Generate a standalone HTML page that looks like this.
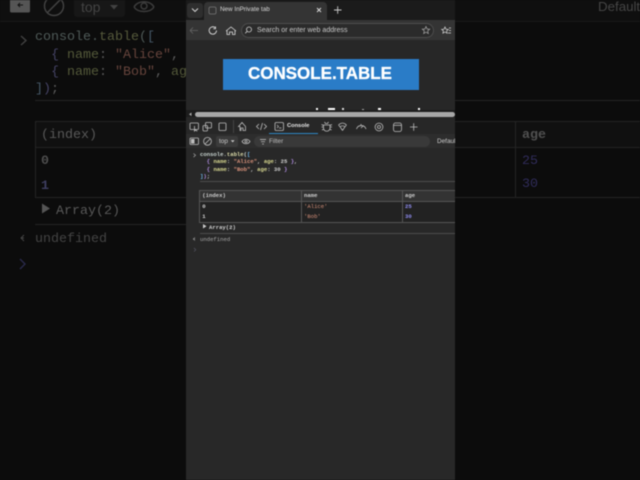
<!DOCTYPE html>
<html><head><meta charset="utf-8">
<style>
html,body{margin:0;padding:0;width:640px;height:480px;overflow:hidden;background:#0c0c0c}
div,svg{position:absolute}
.t{white-space:pre;font-family:"Liberation Sans",sans-serif;line-height:1}
.m{white-space:pre;font-family:"Liberation Mono",monospace;line-height:1}
.bm{font-size:13.33px;color:#585858}
.sm{font-size:5.6px;color:#cfcfcf;font-weight:bold}
svg{overflow:visible;fill:none}
</style></head><body>
<div style="left:0;top:0;width:640px;height:480px;overflow:hidden;filter:blur(.45px)">

<!-- left dim area -->
<div style="left:0;top:0;width:186px;height:21px;background:#0f0f0f"></div>
<div style="left:0;top:21px;width:186px;height:1px;background:#191919"></div>
<div style="left:74px;top:0;width:51px;height:17px;background:#171717;border-radius:0 0 3px 3px"></div>
<svg style="left:0;top:0" width="186" height="22">
<rect x="10" y="-4" width="20" height="16.500" rx="1.500" fill="#555"/><path d="M23 5h-5M20 3l-2 2 2 2" stroke="#111" stroke-width="1"/>
<circle cx="54" cy="6" r="9.500" stroke="#444" stroke-width="1.400"/><path d="M47 13L61-1" stroke="#444" stroke-width="1.400"/>
<path d="M110 5h8l-4 4.500z" fill="#424242"/>
<path d="M134 7c4-7 16-7 20 0" stroke="#3c3c3c" stroke-width="1.500"/><path d="M134 7c4 6 16 6 20 0" stroke="#3c3c3c" stroke-width="1.500"/><circle cx="144" cy="6" r="3" stroke="#3c3c3c" stroke-width="1.400"/>
<path d="M21 36l5 4.500-5 4.500" stroke="#424242" stroke-width="1.400"/>
</svg>
<div class="t" style="left:81px;top:0;font-size:14px;color:#444">top</div>
<div class="m bm" style="left:35px;top:31px"><span style="color:#4f5a58">console.</span><span style="color:#565a3c">table</span><span style="color:#4f5a58">(</span><span style="color:#465868">[</span></div>
<div class="m bm" style="left:35px;top:48.500px">  <span style="color:#464466">{</span> <span style="color:#54593a">name</span><span style="color:#5c5c5c">:</span> <span style="color:#66443c">"Alice"</span><span style="color:#5c5c5c">, </span><span style="color:#54593a">ag</span></div>
<div class="m bm" style="left:35px;top:65.500px">  <span style="color:#464466">{</span> <span style="color:#54593a">name</span><span style="color:#5c5c5c">:</span> <span style="color:#66443c">"Bob"</span><span style="color:#5c5c5c">, </span><span style="color:#54593a">age</span></div>
<div class="m bm" style="left:35px;top:83px"><span style="color:#465868">]</span><span style="color:#464466">)</span><span style="color:#5c5c5c">;</span></div>
<div style="left:35px;top:100px;width:151px;height:1px;background:#242424"></div>
<!-- left table -->
<div style="left:35px;top:121px;width:151px;height:1px;background:#242424"></div>
<div style="left:35px;top:147px;width:151px;height:1px;background:#242424"></div>
<div style="left:35px;top:197px;width:151px;height:1px;background:#242424"></div>
<div style="left:35px;top:121px;width:1px;height:77px;background:#242424"></div>
<div style="left:36px;top:122px;width:150px;height:25px;background:#101010"></div>
<div class="m bm" style="left:41px;top:129px">(index)</div>
<div class="m bm" style="left:41px;top:155px;font-weight:bold;color:#4e4e4e">0</div>
<div class="m bm" style="left:41px;top:180px;font-weight:bold;color:#3e3e60">1</div>
<svg style="left:0;top:200px" width="186" height="80">
<path d="M42 3.500l8 5-8 5z" fill="#555"/>
<path d="M24 35l-3 3 3 3" stroke="#454545" stroke-width="1"/><path d="M21 38h3" stroke="#454545"/>
<path d="M20 59l5 5-5 5" stroke="#2a2a4c" stroke-width="1.400"/>
</svg>
<div class="m bm" style="left:56px;top:205px">Array(2)</div>
<div style="left:35px;top:224px;width:151px;height:1px;background:#242424"></div>
<div class="m bm" style="left:35px;top:232.500px;color:#444">undefined</div>

<!-- right dim area -->
<div style="left:455px;top:0;width:185px;height:21px;background:#0f0f0f"></div>
<div style="left:455px;top:21px;width:185px;height:1px;background:#191919"></div>
<div style="left:455px;top:100px;width:185px;height:1px;background:#242424"></div>
<div style="left:455px;top:121px;width:185px;height:1px;background:#242424"></div>
<div style="left:455px;top:122px;width:185px;height:25px;background:#101010"></div>
<div style="left:455px;top:147px;width:185px;height:1px;background:#242424"></div>
<div style="left:455px;top:197px;width:185px;height:1px;background:#242424"></div>
<div style="left:515px;top:121px;width:1px;height:77px;background:#242424"></div>
<div class="t" style="left:598px;top:0;font-size:13.300px;color:#454545">Default</div>
<div class="m bm" style="left:522px;top:129px;font-weight:bold;color:#505050">age</div>
<div class="m bm" style="left:522px;top:155px;color:#302c5a">25</div>
<div class="m bm" style="left:522px;top:178px;color:#302c5a">30</div>

<!-- center -->
<div style="left:186px;top:0;width:269px;height:480px;background:#282828;overflow:hidden">
 <div style="left:0;top:0;width:269px;height:20px;background:#1b1b1b"></div>
 <div style="left:1px;top:3px;width:16px;height:15px;background:#2e2e2e;border-radius:3px"></div>
 <div style="left:18px;top:2px;width:123px;height:18px;background:#343434;border-radius:4px 4px 0 0"></div>
 <div style="left:0;top:20px;width:269px;height:20px;background:#343434"></div>
 <div style="left:0;top:40px;width:269px;height:70px;background:#272727"></div>
 <div style="left:37px;top:59px;width:196px;height:31px;background:#2a7cc7"></div>
 <div class="t" style="left:62px;top:65px;font-size:17.600px;font-weight:bold;color:#fff;-webkit-text-stroke:.3px #fff;transform-origin:0 0;transform:scaleX(.965)">CONSOLE.TABLE</div>
 <div class="t" style="left:34px;top:7px;font-size:6.300px;color:#d8d8d8">New InPrivate tab</div>
 <div style="left:55px;top:23px;width:193px;height:15px;border-radius:8px;background:#2b2b2b;box-shadow:inset 0 0 0 1px #4d4d4d"></div>
 <div class="t" style="left:71px;top:27px;font-size:7.050px;color:#c8c8c8">Search or enter web address</div>

 <svg style="left:0;top:0;z-index:2" width="269" height="130">
  <path d="M6 8.500l3 3 3-3" stroke="#ddd" stroke-width=".9"/>
  <rect x="23" y="7" width="7" height="7" rx="1.500" stroke="#777" stroke-width=".8"/>
  <path d="M131 8l4 4m0-4l-4 4" stroke="#ddd" stroke-width=".9"/>
  <path d="M148 10h7.500M151.700 6.200v7.500" stroke="#ccc" stroke-width=".9"/>
  <path d="M4 30.500h8M4 30.500l3-3M4 30.500l3 3" stroke="#666" stroke-width=".8"/>
  <path d="M29 27.500a3.700 3.700 0 1 0 1.500 3M29.500 26.500v2.200h-2.200" stroke="#ddd" stroke-width=".9"/>
  <path d="M40 31l5-4 5 4M41 30.500v4h2.500v-2.500h3v2.500h2.500v-4" stroke="#ddd" stroke-width=".8"/>
  <circle cx="63" cy="29.500" r="2.500" stroke="#ccc" stroke-width=".8"/><path d="M61.200 31.300l-2 2" stroke="#ccc" stroke-width=".8"/>
  <path d="M240 26.500l1.100 2.500 2.600.2-2 1.700.6 2.600-2.300-1.400-2.300 1.400.6-2.600-2-1.700 2.600-.2z" stroke="#aaa" stroke-width=".7"/>
  <path d="M259 27l1 2.200 2.300.2-1.700 1.500.5 2.300-2.100-1.200-2.100 1.200.5-2.300-1.700-1.500 2.300-.2z" stroke="#ddd" stroke-width=".7"/><path d="M263 28h2M263 30.500h2M262 33h3" stroke="#ddd" stroke-width=".7"/>
 </svg>

 <!-- scrollbar -->
 <div style="left:0;top:110px;width:269px;height:7px;background:#1d1d1d"></div>
 <div style="left:9px;top:112px;width:260px;height:4.500px;background:#a8a8a8;border-radius:3px"></div>
 <svg style="left:0;top:108px" width="10" height="9"><path d="M5.500 4.500L3 6.300l2.500 1.800z" fill="#aaa"/></svg>
 <div style="left:130px;top:107.500px;width:2px;height:2px;background:#fff"></div>
 <div style="left:142px;top:107.500px;width:7px;height:2px;background:#fff"></div>
 <div style="left:156px;top:108px;width:1.500px;height:1.500px;background:#ddd"></div>
 <div style="left:176px;top:108.500px;width:1.500px;height:1px;background:#aaa"></div>
 <div style="left:192px;top:107.500px;width:2.500px;height:2px;background:#fff"></div>
 <div style="left:232px;top:107.500px;width:2px;height:2px;background:#fff"></div>

 <!-- devtools toolbars -->
 <div style="left:0;top:117px;width:269px;height:17px;background:#272727"></div>
 <div style="left:47px;top:120px;width:1px;height:13px;background:#444"></div>
 <div style="left:83px;top:132.800px;width:49px;height:1.300px;background:#2d86c4"></div>
 <div class="t" style="left:101px;top:124px;font-size:5.700px;font-weight:bold;color:#e6e6e6">Console</div>
 <div style="left:0;top:134px;width:269px;height:14px;background:#2d2d2d"></div>
 <div style="left:30px;top:136px;width:22px;height:11px;background:#3b3b3b;border-radius:2px"></div>
 <div class="t" style="left:33px;top:138.500px;font-size:6.400px;color:#ccc">top</div>
 <div style="left:68px;top:136px;width:176px;height:11px;background:#393939;border-radius:6px"></div>
 <div class="t" style="left:83px;top:138.500px;font-size:6.400px;color:#bbb">Filter</div>
 <div class="t" style="left:251px;top:138.500px;font-size:6.400px;color:#ccc">Default</div>
 <svg style="left:0;top:117px;z-index:3" width="269" height="31">
  <g stroke="#bdbdbd" stroke-width=".8">
  <rect x="4" y="6" width="8.500" height="6.500" rx="1"/><path d="M8.500 9v5l1.200-1.200 1.500 1.500"/>
  <rect x="19.500" y="5.500" width="6" height="5.500" rx="1"/><rect x="17" y="8.500" width="4.500" height="5.500" rx="1"/>
  <rect x="33" y="6" width="7" height="7.500" rx="1"/>
  <path d="M54 9.500l-1.500 0 3.500-4 3.500 4v4h-2.500v-2.500h-2v2.500h-1z"/>
  <path d="M73 7l-2.500 2.500 2.500 2.500M78 7l2.500 2.500-2.500 2.500M76.500 6l-2 7"/>
  <rect x="89" y="5.500" width="8.500" height="8" rx="1.200"/><path d="M91 8l1.500 1.500-1.500 1.500M93 11h2.500" stroke-width=".7"/>
  <path d="M138.500 5l1 1.500h2l1-1.500M137.500 8h6.500v3a3.200 3.200 0 0 1-6.500 0zM135.500 7.500l2 1M135.500 10h2M136 13l1.800-1M146 7.500l-2 1M146 10h-2M145.500 13l-1.800-1"/>
  <path d="M152.500 8c2.500-2.500 5.500-2.500 8 0M154 10c1.500-1.500 3.500-1.500 5 0M152.500 8c2 2 3 4 4 5.500M160.500 8c-2 2-3 4-4 5.500"/>
  <path d="M170.500 12a5 5 0 0 1 9.500 0M175 11l2.500-2.500M175 7v1.500"/>
  <circle cx="193" cy="10" r="3.900"/><circle cx="193" cy="10" r="1.500"/>
  <rect x="207.500" y="6" width="8" height="8.500" rx="2"/><path d="M207.500 8.300h8"/>
  <path d="M224 10h7.500M227.700 6.200v7.500"/>
  </g>
  <!-- second row -->
  <rect x="4" y="21" width="8.500" height="6.500" rx="1" stroke="#bdbdbd" stroke-width=".8"/><rect x="5" y="22" width="3.500" height="4.500" fill="#bdbdbd"/>
  <circle cx="21.500" cy="24.300" r="3.900" stroke="#bdbdbd" stroke-width=".8"/><path d="M19 27l5-5" stroke="#bdbdbd" stroke-width=".8"/>
  <path d="M44.800 23.200h3.800l-1.900 2.200z" fill="#ccc"/>
  <path d="M56 24.500c2-3 6-3 8 0c-2 3-6 3-8 0z" stroke="#bbb" stroke-width=".8"/><circle cx="60" cy="24.500" r="1.100" stroke="#bbb" stroke-width=".8"/>
  <path d="M74 22.500h6M75 24.700h4M76.200 27h1.600" stroke="#aaa" stroke-width=".9"/>
  <!-- prompt -->
  <path d="M7.500 36.500l2 1.800-2 1.800" stroke="#aaa" stroke-width=".7"/>
 </svg>

 <!-- console -->
 <div class="m sm" style="left:14px;top:151.700px"><span style="color:#c9d4d0">console.</span><span style="color:#dcdca8">table</span><span style="color:#c9d4d0">(</span><span style="color:#6fb7e8">[</span></div>
 <div class="m sm" style="left:14px;top:159.200px">  <span style="color:#b08ce0">{</span> <span style="color:#d8d890">name</span><span style="color:#ccc">:</span> <span style="color:#d8917a">"Alice"</span><span style="color:#ccc">, </span><span style="color:#d8d890">age</span><span style="color:#ccc">: 25 </span><span style="color:#b08ce0">}</span><span style="color:#ccc">,</span></div>
 <div class="m sm" style="left:14px;top:166.500px">  <span style="color:#b08ce0">{</span> <span style="color:#d8d890">name</span><span style="color:#ccc">:</span> <span style="color:#d8917a">"Bob"</span><span style="color:#ccc">, </span><span style="color:#d8d890">age</span><span style="color:#ccc">: 30 </span><span style="color:#b08ce0">}</span></div>
 <div class="m sm" style="left:14px;top:174px"><span style="color:#6fb7e8">]</span><span style="color:#b08ce0">)</span><span style="color:#ccc">;</span></div>
 <div style="left:14px;top:181px;width:255px;height:1px;background:#4c4c4c"></div>

 <div style="left:13px;top:190px;width:256px;height:11px;background:#333"></div>
 <div style="left:13px;top:201px;width:256px;height:21px;background:#222"></div>
 <div style="left:13px;top:190px;width:256px;height:32.500px;box-sizing:border-box;border:1px solid #555;border-right:0"></div>
 <div style="left:13px;top:200.500px;width:256px;height:1px;background:#555"></div>
 <div style="left:115px;top:190px;width:1px;height:32px;background:#555"></div>
 <div style="left:216px;top:190px;width:1px;height:32px;background:#555"></div>
 <div class="m sm" style="left:16.300px;top:193px">(index)</div>
 <div class="m sm" style="left:118px;top:193px">name</div>
 <div class="m sm" style="left:219px;top:193px">age</div>
 <div class="m sm" style="left:16.300px;top:204px">0</div>
 <div class="m sm" style="left:16.300px;top:214.300px">1</div>
 <div class="m sm" style="left:118px;top:204px;color:#d8917a;font-weight:normal">'Alice'</div>
 <div class="m sm" style="left:118px;top:214.300px;color:#d8917a;font-weight:normal">'Bob'</div>
 <div class="m sm" style="left:219px;top:204px;color:#8f8cf0">25</div>
 <div class="m sm" style="left:219px;top:214.300px;color:#8f8cf0">30</div>
 <svg style="left:17px;top:224px" width="6" height="6"><path d="M0 0l3.500 2.200L0 4.500z" fill="#ccc"/></svg>
 <div class="m sm" style="left:23px;top:225px">Array(2)</div>
 <div style="left:14px;top:232.500px;width:255px;height:1px;background:#4c4c4c"></div>
 <svg style="left:0;top:235px" width="14" height="20"><path d="M9 2.500l-1.800 1.500 1.800 1.500M7.200 4h2" stroke="#999" stroke-width=".6"/><path d="M8 13l1.800 1.800L8 16.600" stroke="#5c5c6c" stroke-width=".6"/></svg>
 <div class="m sm" style="left:14px;top:236.600px;color:#a8a8a8;font-weight:normal">undefined</div>
</div>
</div>
</body></html>
